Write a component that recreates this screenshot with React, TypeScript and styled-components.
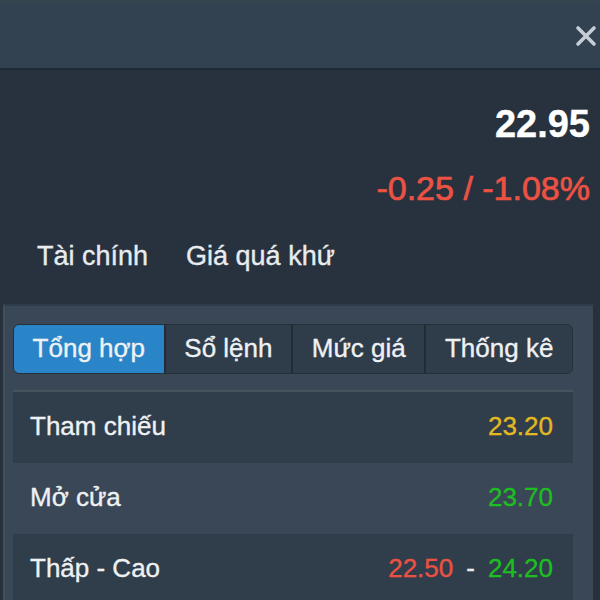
import React from "react";
import styled, { createGlobalStyle } from "styled-components";

interface ISegmentProps {
  $active?: boolean;
}

interface IRowProps {
  $shaded?: boolean;
}

interface IValueProps {
  $tone: "ref" | "up" | "down" | "plain";
}

const toneColors = {
  ref: "#e2b823",
  up: "#1ebd22",
  down: "#ec5243",
  plain: "#e6eaee",
};

const GlobalStyle = createGlobalStyle`
  html, body {
    margin: 0;
    padding: 0;
    background: #27323e;
  }
  body {
    font-family: "Liberation Sans", Arial, sans-serif;
    -webkit-text-stroke: 0.35px currentColor;
  }
`;

const Page = styled.div`
  width: 600px;
  height: 600px;
  overflow: hidden;
  display: flex;
  flex-direction: column;
  background: #27323e;
`;

const Header = styled.header`
  height: 64px;
  flex-shrink: 0;
  display: flex;
  align-items: center;
  justify-content: flex-end;
  background: #334250;
  border-top: 4px solid #36444f;
  border-bottom: 2px solid #202a34;
`;

const CloseButton = styled.button`
  width: 28px;
  height: 28px;
  display: flex;
  align-items: center;
  justify-content: center;
  padding: 0;
  border: none;
  background: transparent;
  color: #c6cdd5;
  cursor: pointer;
`;

const Quote = styled.section`
  display: flex;
  flex-direction: column;
  align-items: flex-end;
  padding: 35px 10px 0 0;
`;

const Price = styled.div`
  font-size: 38px;
  line-height: 38px;
  font-weight: bold;
  color: #ffffff;
`;

const Change = styled.div`
  margin-top: 28px;
  font-size: 34px;
  line-height: 34px;
  color: ${toneColors.down};
  -webkit-text-stroke: 0.7px currentColor;
`;

const SubTabs = styled.nav`
  display: flex;
  gap: 38px;
  padding: 38px 0 35px 37px;
`;

const SubTab = styled.span`
  font-size: 27px;
  line-height: 26px;
  color: #e8ecf0;
`;

const Panel = styled.section`
  flex: 1;
  margin: 0 5px 0 3px;
  padding: 18px 20px 0 8px;
  background: #394756;
  border-left: 2px solid #42505e;
  border-right: 2px solid #27313c;
  border-top: 2px solid #2f3b48;
`;

const Segmented = styled.div`
  display: flex;
  height: 48px;
  border: 1px solid #26303b;
  border-radius: 6px;
  overflow: hidden;
  background: #2e3c4a;
`;

const Segment = styled.div<ISegmentProps>`
  flex: 1 1 auto;
  display: flex;
  align-items: center;
  justify-content: center;
  padding-bottom: 2px;
  font-size: 26px;
  color: #eef1f4;
  background: ${({ $active }) => ($active ? "#2a84c8" : "#2f3c4a")};
  border-left: 2px solid #222c36;

  &:first-child {
    border-left: none;
  }
`;

const Divider = styled.hr`
  margin: 16px 0 0;
  border: none;
  height: 2px;
  background: #46535f;
`;

const Row = styled.div<IRowProps>`
  height: 71px;
  display: flex;
  align-items: center;
  justify-content: space-between;
  padding: 0 20px 2px 17px;
  box-sizing: border-box;
  background: ${({ $shaded }) => ($shaded ? "#303d4a" : "transparent")};
`;

const Label = styled.span`
  font-size: 26px;
  color: #eef1f4;
`;

const Values = styled.span`
  display: flex;
  gap: 13px;
  font-size: 26px;
`;

const Value = styled.span<IValueProps>`
  color: ${({ $tone }) => toneColors[$tone]};
`;

const rows = [
  { label: "Tham chiếu", values: [{ text: "23.20", tone: "ref" as const }] },
  { label: "Mở cửa", values: [{ text: "23.70", tone: "up" as const }] },
  {
    label: "Thấp - Cao",
    values: [
      { text: "22.50", tone: "down" as const },
      { text: "-", tone: "plain" as const },
      { text: "24.20", tone: "up" as const },
    ],
  },
];

const App = () => {
  return (
    <Page>
      <GlobalStyle />
      <Header>
        <CloseButton aria-label="Đóng">
          <svg width="22" height="22" viewBox="0 0 22 22">
            <path
              d="M3 3 L19 19 M19 3 L3 19"
              stroke="currentColor"
              strokeWidth="3.6"
              strokeLinecap="round"
            />
          </svg>
        </CloseButton>
      </Header>

      <Quote>
        <Price>22.95</Price>
        <Change>-0.25 / -1.08%</Change>
      </Quote>

      <SubTabs>
        <SubTab>Tài chính</SubTab>
        <SubTab>Giá quá khứ</SubTab>
      </SubTabs>

      <Panel>
        <Segmented>
          <Segment $active>Tổng hợp</Segment>
          <Segment>Sổ lệnh</Segment>
          <Segment>Mức giá</Segment>
          <Segment>Thống kê</Segment>
        </Segmented>
        <Divider />
        {rows.map((row, i) => (
          <Row key={row.label} $shaded={i % 2 === 0}>
            <Label>{row.label}</Label>
            <Values>
              {row.values.map((v, j) => (
                <Value key={j} $tone={v.tone}>
                  {v.text}
                </Value>
              ))}
            </Values>
          </Row>
        ))}
      </Panel>
    </Page>
  );
};

export default App;
